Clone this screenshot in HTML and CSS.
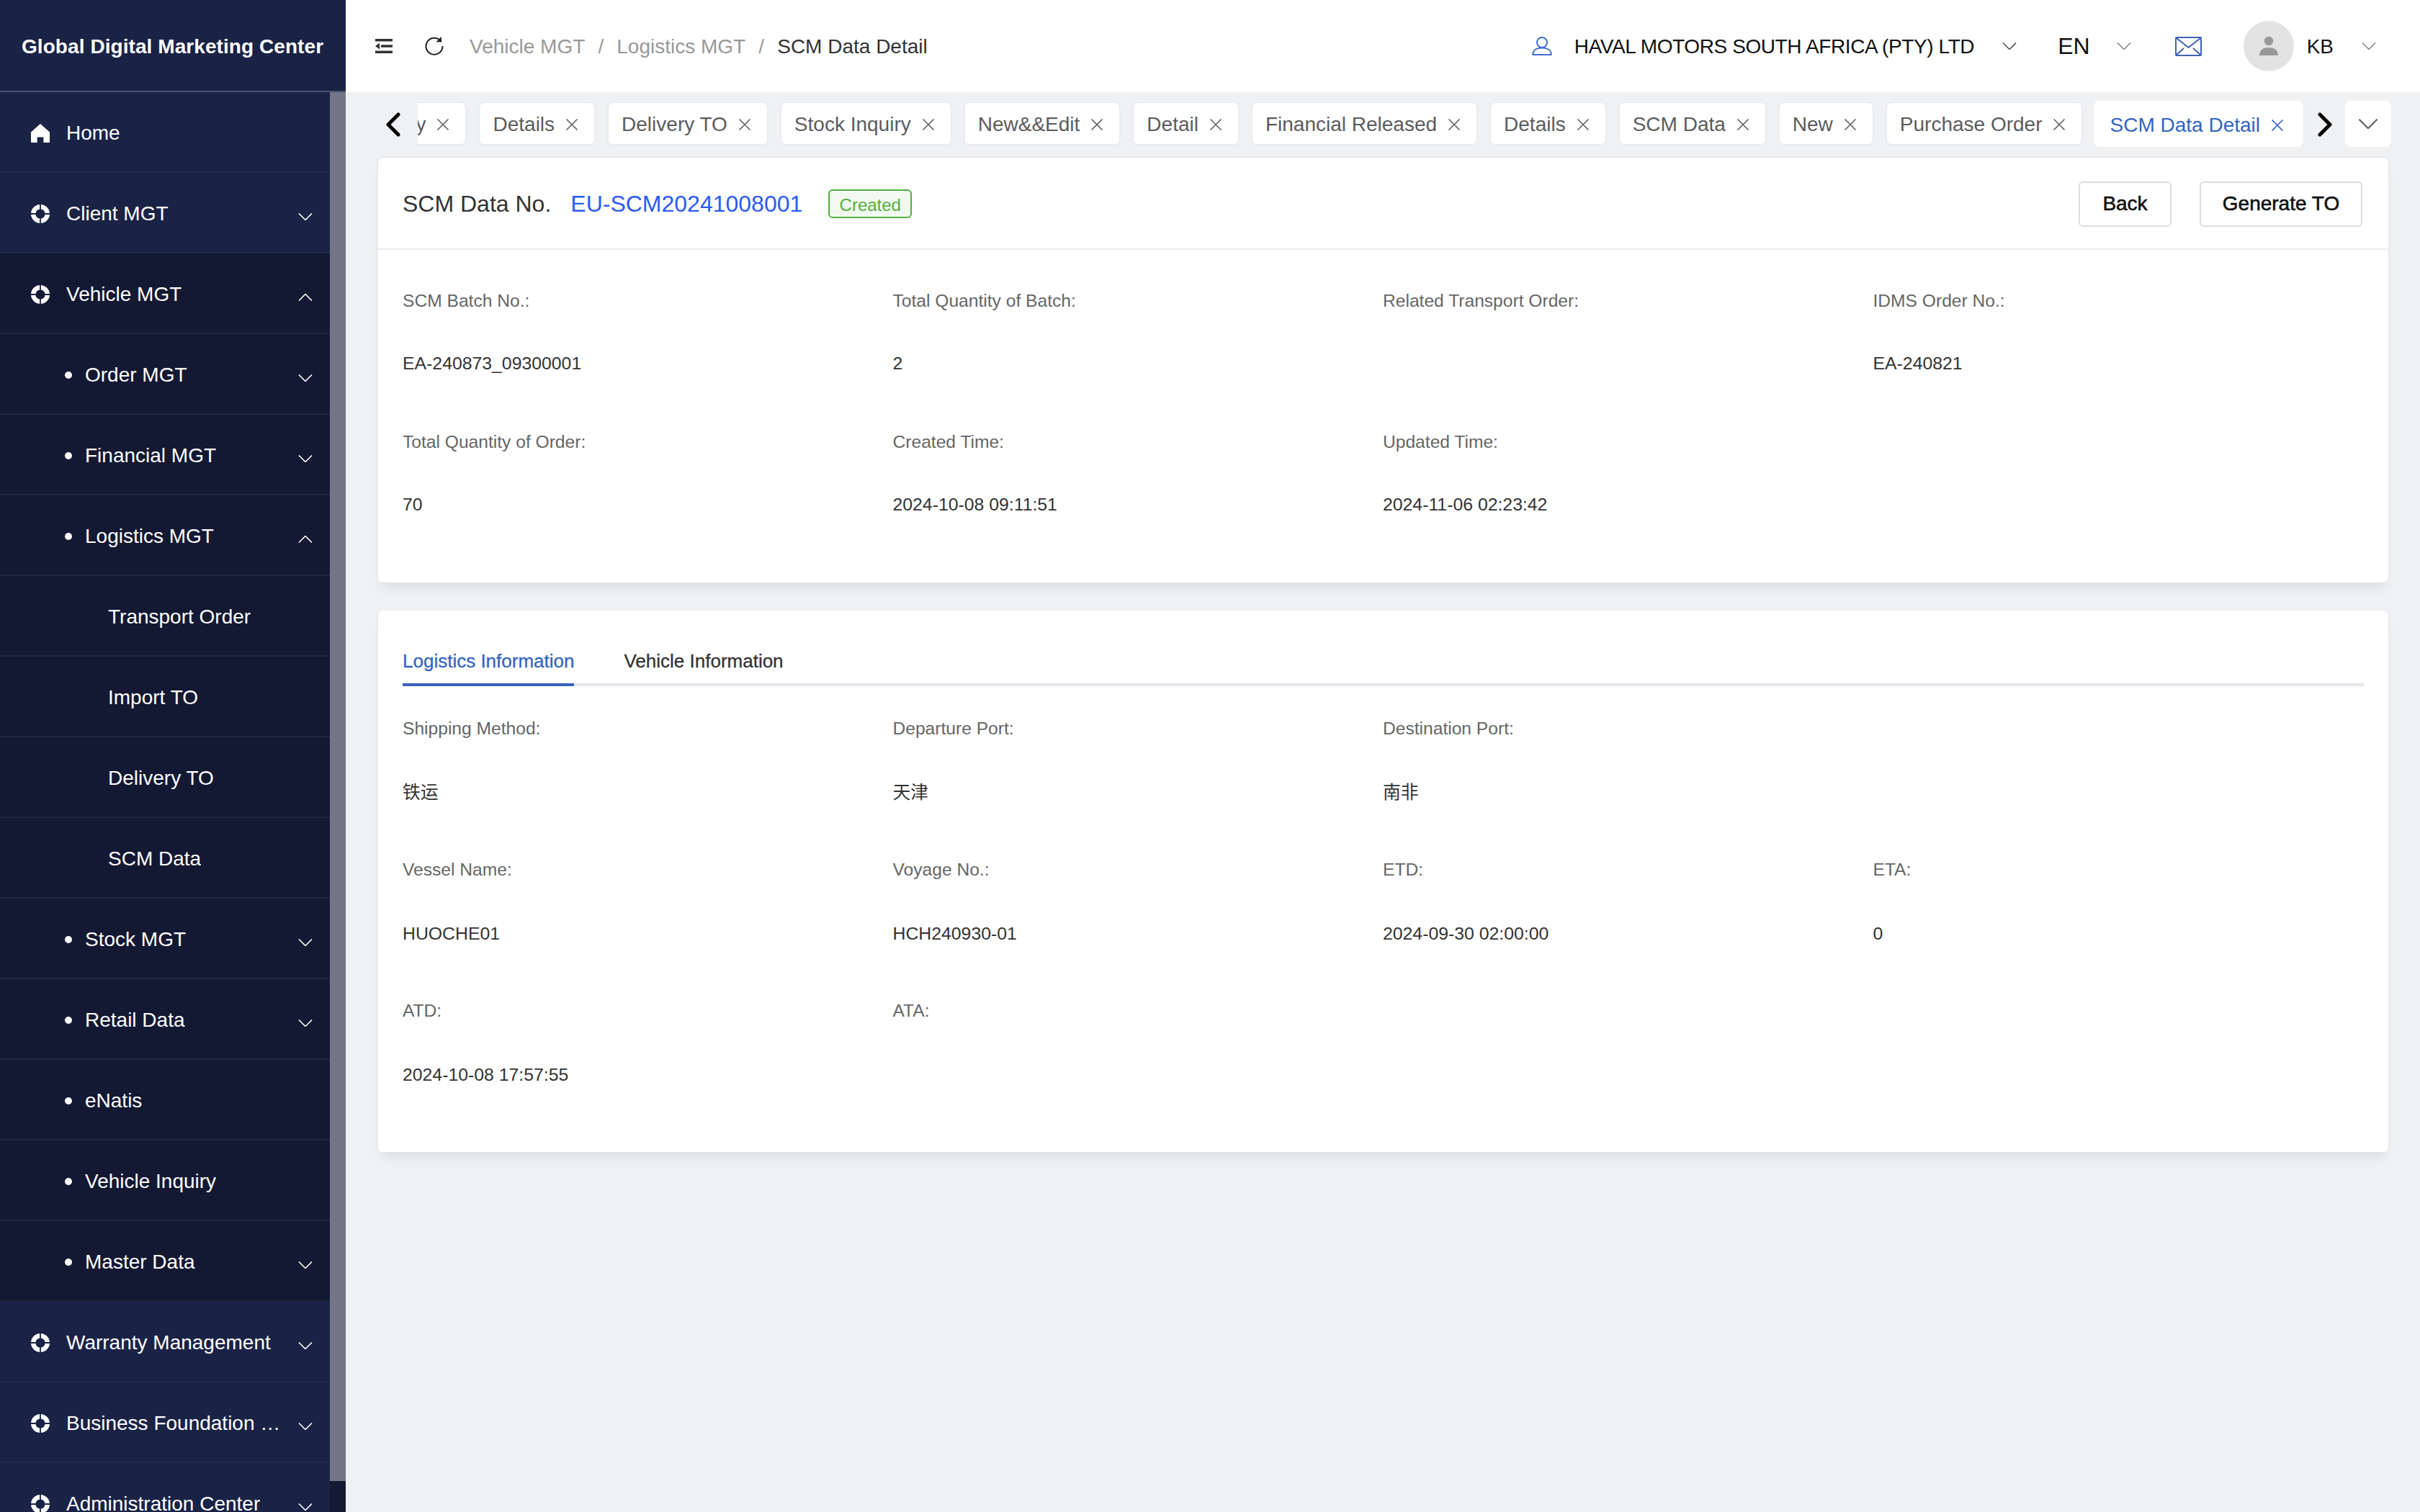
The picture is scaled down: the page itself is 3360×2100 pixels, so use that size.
FILE: index.html
```html
<!DOCTYPE html>
<html lang="en">
<head>
  <meta charset="UTF-8">
  <title>SCM Data Detail</title>
  <link rel="stylesheet" href="styles.css">
</head>
<body>
  <svg class="defs" width="0" height="0">
    <symbol id="chev" viewBox="0 0 20 10"><path d="M1 .5 10 9.5 19 .5" fill="none" stroke="currentColor" stroke-width="1.6"/></symbol>
    <symbol id="buoy" viewBox="0 0 26 26">
      <circle cx="13" cy="13" r="9.8" fill="none" stroke="#fff" stroke-width="6.4"/>
      <path d="M13 0v7M13 19v7M0 13h7M19 13h7" stroke="#1a2346" stroke-width="1.8"/>
    </symbol>
    <symbol id="close" viewBox="0 0 18 18"><path d="M1.5 1.5 16.5 16.5M16.5 1.5 1.5 16.5" fill="none" stroke="currentColor" stroke-width="1.7"/></symbol>
  </svg>

  <div class="app">
    <!-- Sidebar -->
    <aside class="sidebar">
      <div class="brand">Global Digital Marketing Center</div>
      <div class="side-body">
        <nav class="menu">
          <a class="item">
            <svg class="ico" viewBox="0 0 24 24"><path d="M12 0 24 10.5V24H16V17H8V24H0V10.5Z" fill="#fff"/></svg>
            <span class="label">Home</span>
          </a>
          <a class="item"><svg class="ico"><use href="#buoy"/></svg><span class="label">Client MGT</span><svg class="arrow"><use href="#chev"/></svg></a>
          <div class="open">
            <a class="item"><svg class="ico"><use href="#buoy"/></svg><span class="label">Vehicle MGT</span><svg class="arrow up"><use href="#chev"/></svg></a>
            <a class="item sub"><i class="dot"></i><span class="label">Order MGT</span><svg class="arrow"><use href="#chev"/></svg></a>
            <a class="item sub"><i class="dot"></i><span class="label">Financial MGT</span><svg class="arrow"><use href="#chev"/></svg></a>
            <a class="item sub"><i class="dot"></i><span class="label">Logistics MGT</span><svg class="arrow up"><use href="#chev"/></svg></a>
            <a class="item leaf"><span class="label">Transport Order</span></a>
            <a class="item leaf"><span class="label">Import TO</span></a>
            <a class="item leaf"><span class="label">Delivery TO</span></a>
            <a class="item leaf"><span class="label">SCM Data</span></a>
            <a class="item sub"><i class="dot"></i><span class="label">Stock MGT</span><svg class="arrow"><use href="#chev"/></svg></a>
            <a class="item sub"><i class="dot"></i><span class="label">Retail Data</span><svg class="arrow"><use href="#chev"/></svg></a>
            <a class="item sub"><i class="dot"></i><span class="label">eNatis</span></a>
            <a class="item sub"><i class="dot"></i><span class="label">Vehicle Inquiry</span></a>
            <a class="item sub"><i class="dot"></i><span class="label">Master Data</span><svg class="arrow"><use href="#chev"/></svg></a>
          </div>
          <a class="item"><svg class="ico"><use href="#buoy"/></svg><span class="label">Warranty Management</span><svg class="arrow"><use href="#chev"/></svg></a>
          <a class="item"><svg class="ico"><use href="#buoy"/></svg><span class="label">Business Foundation Data</span><svg class="arrow"><use href="#chev"/></svg></a>
          <a class="item"><svg class="ico"><use href="#buoy"/></svg><span class="label">Administration Center</span><svg class="arrow"><use href="#chev"/></svg></a>
        </nav>
        <div class="scroll-track"><div class="scroll-thumb"></div></div>
      </div>
    </aside>

    <div class="main">
      <!-- Top bar -->
      <header class="topbar">
        <svg class="collapse" viewBox="0 0 24 20"><path d="M0 0h24v3.4H0zM0 16.6h24V20H0zM8 8.3h16v3.4H8zM6 5.5v9L0 10z" fill="#333"/></svg>
        <svg class="refresh" viewBox="0 0 26 26"><path d="M21.5 5.5A11.5 11.5 0 1 0 24.5 13" fill="none" stroke="#222" stroke-width="2"/><path d="M15.5 7.2 23.2 7.6 22.8 0Z" fill="#222"/></svg>
        <div class="crumbs">
          <span>Vehicle MGT</span><b>/</b><span>Logistics MGT</span><b>/</b><span class="now">SCM Data Detail</span>
        </div>
        <div class="top-right">
          <svg class="user" viewBox="0 0 28 26"><circle cx="14" cy="8" r="7" fill="none" stroke="#3f6fcf" stroke-width="2"/><path d="M1.2 25c0-6 5-9.500 12.800-9.500S26.800 19 26.800 25Z" fill="none" stroke="#3f6fcf" stroke-width="2" stroke-linejoin="round"/></svg>
          <span class="company">HAVAL MOTORS SOUTH AFRICA (PTY) LTD</span>
          <svg class="top-chev first"><use href="#chev"/></svg>
          <span class="lang">EN</span>
          <svg class="top-chev second"><use href="#chev"/></svg>
          <svg class="mail" viewBox="0 0 37 27"><rect x="1" y="1" width="35" height="25" rx="1" fill="none" stroke="#3f63b8" stroke-width="2"/><path d="M2 2 18.500 15 35 2M2 25 12 16M35 25 25 16" fill="none" stroke="#3f63b8" stroke-width="2"/></svg>
          <span class="avatar"><svg viewBox="0 0 28 28"><circle cx="14" cy="7" r="6.200" fill="#999"/><path d="M1 27c0-8 6-11 13-11s13 3 13 11Z" fill="#999"/></svg></span>
          <span class="who">KB</span>
          <svg class="top-chev third"><use href="#chev"/></svg>
        </div>
      </header>

      <!-- Open page tabs -->
      <div class="tabbar">
        <svg class="pager" viewBox="0 0 20 34"><path d="M17 3 3 17 17 31" fill="none" stroke="#000" stroke-width="5" stroke-linecap="round" stroke-linejoin="round"/></svg>
        <div class="tabs">
          <span class="tab">Stock Inquiry<svg class="x"><use href="#close"/></svg></span>
          <span class="tab">Details<svg class="x"><use href="#close"/></svg></span>
          <span class="tab">Delivery TO<svg class="x"><use href="#close"/></svg></span>
          <span class="tab">Stock Inquiry<svg class="x"><use href="#close"/></svg></span>
          <span class="tab">New&amp;&amp;Edit<svg class="x"><use href="#close"/></svg></span>
          <span class="tab">Detail<svg class="x"><use href="#close"/></svg></span>
          <span class="tab">Financial Released<svg class="x"><use href="#close"/></svg></span>
          <span class="tab">Details<svg class="x"><use href="#close"/></svg></span>
          <span class="tab">SCM Data<svg class="x"><use href="#close"/></svg></span>
          <span class="tab">New<svg class="x"><use href="#close"/></svg></span>
          <span class="tab">Purchase Order<svg class="x"><use href="#close"/></svg></span>
          <span class="tab active">SCM Data Detail<svg class="x"><use href="#close"/></svg></span>
        </div>
        <svg class="pager" viewBox="0 0 20 34"><path d="M3 3 17 17 3 31" fill="none" stroke="#000" stroke-width="5" stroke-linecap="round" stroke-linejoin="round"/></svg>
        <span class="more"><svg><use href="#chev"/></svg></span>
      </div>

      <!-- Summary card -->
      <section class="card top-card">
        <div class="card-head">
          <span class="no-label">SCM Data No.</span>
          <span class="no-value">EU-SCM20241008001</span>
          <span class="status">Created</span>
          <div class="actions">
            <button class="btn back">Back</button>
            <button class="btn gen">Generate TO</button>
          </div>
        </div>
        <div class="fields">
          <div class="field"><label>SCM Batch No.:</label><span>EA-240873_09300001</span></div>
          <div class="field"><label>Total Quantity of Batch:</label><span>2</span></div>
          <div class="field"><label>Related Transport Order:</label><span></span></div>
          <div class="field"><label>IDMS Order No.:</label><span>EA-240821</span></div>
          <div class="field"><label>Total Quantity of Order:</label><span>70</span></div>
          <div class="field"><label>Created Time:</label><span>2024-10-08 09:11:51</span></div>
          <div class="field"><label>Updated Time:</label><span>2024-11-06 02:23:42</span></div>
        </div>
      </section>

      <!-- Detail card -->
      <section class="card detail-card">
        <div class="inner-tabs">
          <span class="inner-tab on">Logistics Information</span>
          <span class="inner-tab">Vehicle Information</span>
        </div>
        <div class="fields">
          <div class="field"><label>Shipping Method:</label><span>铁运</span></div>
          <div class="field"><label>Departure Port:</label><span>天津</span></div>
          <div class="field"><label>Destination Port:</label><span>南非</span></div>
          <div class="field"></div>
          <div class="field"><label>Vessel Name:</label><span>HUOCHE01</span></div>
          <div class="field"><label>Voyage No.:</label><span>HCH240930-01</span></div>
          <div class="field"><label>ETD:</label><span>2024-09-30 02:00:00</span></div>
          <div class="field"><label>ETA:</label><span>0</span></div>
          <div class="field"><label>ATD:</label><span>2024-10-08 17:57:55</span></div>
          <div class="field"><label>ATA:</label><span></span></div>
        </div>
      </section>
    </div>
  </div>
</body>
</html>
```
FILE: styles.css
```css
* {
  box-sizing: border-box;
}
html, body {
  margin: 0;
  height: 100%;
  overflow: hidden;
}
body {
  font-family: "Liberation Sans", "Noto Sans CJK SC", sans-serif;
  font-size: 24px;
  color: #333;
  background-color: #f0f1f3;
}
.defs {
  position: absolute;
}
.app {
  display: flex;
  height: 2100px;
}

/* Sidebar */
.sidebar {
  width: 480px;
  flex-shrink: 0;
  display: flex;
  flex-direction: column;
  background-color: #1a2346;
  overflow: hidden;
}
.brand {
  height: 128px;
  flex-shrink: 0;
  display: flex;
  align-items: center;
  padding: 3px 0 0 30px;
  border-bottom: 2px solid #4b5270;
  color: #fff;
  font-size: 28px;
  font-weight: bold;
  letter-spacing: 0.07px;
  white-space: nowrap;
}
.side-body {
  flex: 1;
  display: flex;
  min-height: 0;
}
.menu {
  width: 458px;
  flex-shrink: 0;
}
.scroll-track {
  width: 22px;
  background-color: #151a34;
}
.scroll-thumb {
  height: 1929px;
  background-color: #747687;
}
.open {
  background-color: #141933;
}
.item {
  height: 112px;
  display: flex;
  align-items: center;
  padding: 4px 0 0 43px;
  border-bottom: 2px solid #222b4c;
  color: #fff;
  font-size: 28px;
  white-space: nowrap;
}
.open .item {
  border-bottom-color: #20263e;
}
.ico {
  width: 26px;
  height: 26px;
  flex-shrink: 0;
  margin-right: 23px;
}
.label {
  max-width: 310px;
  overflow: hidden;
  text-overflow: ellipsis;
}
.arrow {
  width: 20px;
  height: 10px;
  margin-left: auto;
  margin-right: 24px;
  position: relative;
  top: 4px;
}
.arrow.up {
  transform: rotate(180deg);
}
.sub {
  padding-left: 90px;
}
.dot {
  width: 10px;
  height: 10px;
  border-radius: 50%;
  background-color: #fff;
  margin-right: 18px;
}
.leaf {
  padding-left: 150px;
}

/* Top bar */
.main {
  flex: 1;
  min-width: 0;
}
.topbar {
  height: 128px;
  display: flex;
  align-items: center;
  background-color: #fff;
}
.collapse {
  width: 24px;
  height: 20px;
  margin-left: 41px;
}
.refresh {
  width: 26px;
  height: 26px;
  margin-left: 45px;
}
.crumbs {
  display: flex;
  margin-left: 36px;
  padding-top: 2px;
  font-size: 28px;
  color: #999;
  white-space: nowrap;
}
.crumbs b {
  width: 44px;
  text-align: center;
  font-weight: normal;
}
.crumbs .now {
  color: #333;
}
.top-right {
  margin-left: auto;
  display: flex;
  align-items: center;
  color: #111;
  white-space: nowrap;
}
.user {
  width: 28px;
  height: 26px;
}
.company {
  margin-left: 31px;
  padding-top: 2px;
  font-size: 28px;
  letter-spacing: -0.4px;
}
.top-chev {
  width: 20px;
  height: 10px;
  color: #555;
}
.top-chev.first {
  margin-left: 39px;
}
.lang {
  margin-left: 57px;
  font-size: 32px;
}
.top-chev.second {
  margin-left: 37px;
  color: #888;
}
.mail {
  width: 37px;
  height: 27px;
  margin-left: 61px;
}
.avatar {
  width: 70px;
  height: 70px;
  margin-left: 58px;
  display: flex;
  align-items: center;
  justify-content: center;
  border-radius: 50%;
  background-color: #e3e3e3;
}
.avatar svg {
  width: 28px;
  height: 28px;
}
.who {
  margin-left: 18px;
  padding-top: 2px;
  font-size: 28px;
}
.top-chev.third {
  margin-left: 39px;
  margin-right: 61px;
  color: #888;
}

/* Tabs row */
.tabbar {
  height: 80px;
  padding: 12px 40px 0 56px;
  display: flex;
  align-items: flex-start;
}
.pager {
  width: 20px;
  height: 34px;
  flex-shrink: 0;
  margin-top: 16px;
}
.tabs {
  flex: 1;
  min-width: 0;
  margin: 0 20px 0 24px;
  padding-top: 2px;
  display: flex;
  justify-content: flex-end;
  gap: 16px;
  overflow: hidden;
}
.tab {
  height: 60px;
  flex-shrink: 0;
  display: flex;
  align-items: center;
  padding: 3px 22px 0 18px;
  border: 2px solid #ebecef;
  border-top-width: 1px;
  border-radius: 8px;
  background-color: #fff;
  font-size: 28px;
  color: #5c5c5c;
  white-space: nowrap;
}
.tab .x {
  width: 18px;
  height: 18px;
  margin-left: 15px;
  color: #666;
}
.tab.active {
  height: 64px;
  margin-top: -2px;
  margin-left: -1px;
  padding: 3px 27px 0 22px;
  border: none;
  color: #3563c1;
}
.tab.active .x {
  color: #3563c1;
}
.more {
  width: 64px;
  height: 64px;
  flex-shrink: 0;
  margin-left: 18px;
  display: flex;
  align-items: center;
  justify-content: center;
  border-radius: 8px;
  background-color: #fff;
  color: #666;
}
.more svg {
  width: 28px;
  height: 14px;
}

/* Cards */
.card {
  width: 2795px;
  margin-left: 43px;
  border: 2px solid #e8e9ee;
  border-bottom: none;
  border-radius: 8px;
  background-color: #fff;
  box-shadow: 0 14px 14px -6px rgba(0, 0, 0, 0.07);
}
.top-card {
  margin-top: 9px;
  height: 592px;
}
.detail-card {
  margin-top: 39px;
  height: 752px;
  padding-top: 43px;
  border-top: none;
}
.card-head {
  height: 128px;
  display: flex;
  align-items: center;
  padding: 2px 36px 0 34px;
  border-bottom: 2px solid #e9eaee;
}
.no-label {
  font-size: 32px;
}
.no-value {
  margin-left: 27px;
  font-size: 32px;
  color: #2b5cf6;
}
.status {
  width: 116px;
  height: 40px;
  margin-left: 36px;
  display: flex;
  align-items: center;
  justify-content: center;
  padding-top: 3px;
  border: 2px solid #52ae42;
  border-radius: 6px;
  background-color: #f2faf0;
  color: #52ae42;
  font-size: 24px;
}
.actions {
  margin-left: auto;
  display: flex;
  gap: 39px;
}
.btn {
  height: 63px;
  padding: 0;
  border: 2px solid #dcdde3;
  border-radius: 6px;
  background-color: #fff;
  color: #111;
  font-family: inherit;
  font-size: 28px;
  -webkit-text-stroke: 0.6px #111;
}
.btn.back {
  width: 129px;
}
.btn.gen {
  width: 226px;
}
.fields {
  display: grid;
  grid-template-columns: repeat(4, 680.5px);
  grid-auto-rows: 196px;
  padding: 51px 0 0 34px;
}
.field {
  display: flex;
  flex-direction: column;
  gap: 47px;
}
.field label {
  height: 40px;
  line-height: 40px;
  color: #666;
  font-size: 24.6px;
}
.field span {
  height: 40px;
  line-height: 40px;
  color: #333;
  font-size: 24.8px;
}
.inner-tabs {
  margin: 0 34px;
  display: flex;
  gap: 69px;
  border-bottom: 4px solid #e6e6ec;
}
.inner-tab {
  height: 62px;
  margin-bottom: -4px;
  padding-top: 12px;
  font-size: 26px;
  color: #333;
  -webkit-text-stroke: 0.3px currentColor;
}
.inner-tab.on {
  border-bottom: 4px solid #3563c1;
  color: #3563c1;
}
.detail-card .fields {
  padding-top: 39px;
}
.detail-card .field {
  gap: 49px;
}
```
